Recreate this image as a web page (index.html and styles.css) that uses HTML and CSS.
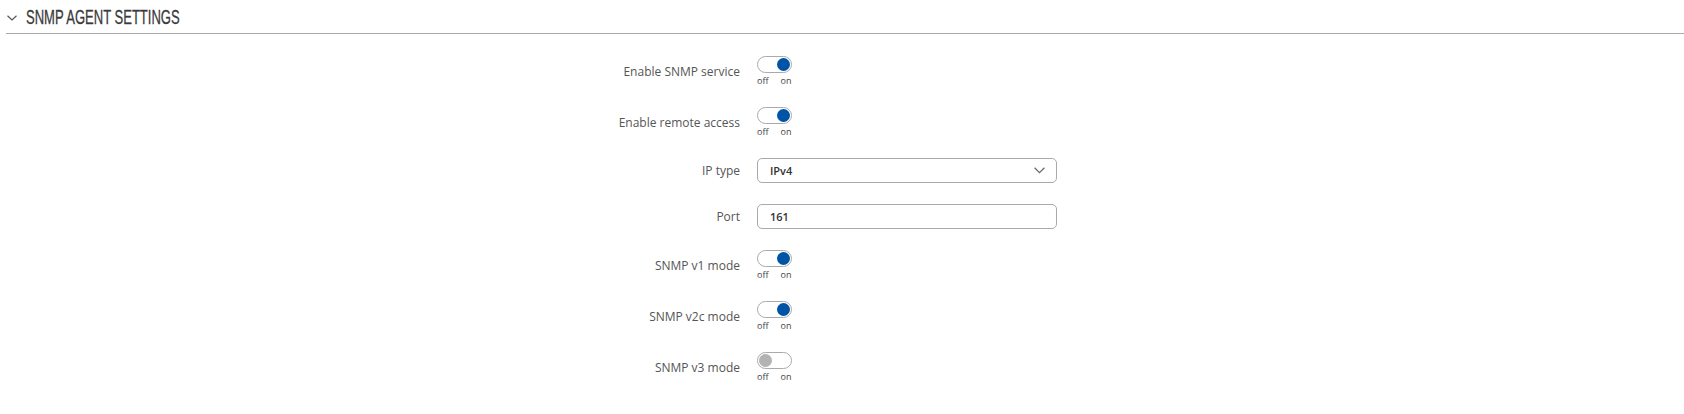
FILE: index.html
```html
<!DOCTYPE html>
<html lang="en">
<head>
    <meta charset="UTF-8">
    <title>SNMP Agent Settings</title>
    <link rel="stylesheet" href="styles.css">
</head>
<body>

<div class="section">
    <div class="section-title">
        <svg class="caret" width="10" height="6" viewBox="0 0 10 6"><path d="M0.5 0.8 L5 5 L9.5 0.8" fill="none" stroke="#555" stroke-width="1.2"/></svg>
        <h3>SNMP AGENT SETTINGS</h3>
    </div>

    <div class="form">
        <div class="field">
            <label>Enable SNMP service</label>
            <div class="switch-box">
                <span class="switch on"><span class="knob"></span></span>
                <span class="switch-text"><span>off</span><span>on</span></span>
            </div>
        </div>

        <div class="field">
            <label>Enable remote access</label>
            <div class="switch-box">
                <span class="switch on"><span class="knob"></span></span>
                <span class="switch-text"><span>off</span><span>on</span></span>
            </div>
        </div>

        <div class="field">
            <label>IP type</label>
            <div class="select">
                <span>IPv4</span>
                <svg width="11" height="7" viewBox="0 0 11 7"><path d="M0.6 0.8 L5.5 5.6 L10.4 0.8" fill="none" stroke="#666" stroke-width="1.2"/></svg>
            </div>
        </div>

        <div class="field">
            <label>Port</label>
            <div class="input">161</div>
        </div>

        <div class="field">
            <label>SNMP v1 mode</label>
            <div class="switch-box">
                <span class="switch on"><span class="knob"></span></span>
                <span class="switch-text"><span>off</span><span>on</span></span>
            </div>
        </div>

        <div class="field">
            <label>SNMP v2c mode</label>
            <div class="switch-box">
                <span class="switch on"><span class="knob"></span></span>
                <span class="switch-text"><span>off</span><span>on</span></span>
            </div>
        </div>

        <div class="field">
            <label>SNMP v3 mode</label>
            <div class="switch-box">
                <span class="switch"><span class="knob"></span></span>
                <span class="switch-text"><span>off</span><span>on</span></span>
            </div>
        </div>
    </div>
</div>

</body>
</html>
```

FILE: styles.css
```css
body {
    margin: 0;
    background-color: #fff;
    font-family: "Open Sans", "Noto Sans", sans-serif;
}

/* Cabecera de la sección */
.section-title {
    display: flex;
    align-items: center;
    height: 33px;
    margin-left: 6px;
    border-bottom: 1px solid #aaa;
}
.caret {
    margin: 2px 9px 0 1px;
}
.section-title h3 {
    margin: 0;
    font-family: "Liberation Sans", Arial, sans-serif;
    font-weight: normal;
    font-size: 21px;
    color: #3a3a3a;
    transform: scaleX(0.62);
    transform-origin: left center;
    -webkit-text-stroke: 0.3px #3a3a3a;
}

/* Formulario */
.form {
    padding-top: 22px;
}
.field {
    display: grid;
    grid-template-columns: 740px 300px;
    column-gap: 17px;
    align-items: center;
    margin-bottom: 21px;
}
.field label {
    text-align: right;
    font-size: 12px;
    color: #555;
}

/* Interruptores */
.switch-box {
    display: flex;
    flex-direction: column;
    height: 30px;
}
.switch {
    position: relative;
    box-sizing: border-box;
    width: 35px;
    height: 17px;
    border: 1px solid #aaa;
    border-radius: 9px;
    background-color: #fff;
}
.switch .knob {
    position: absolute;
    top: 1px;
    left: 1px;
    width: 13px;
    height: 13px;
    border-radius: 50%;
    background-color: #b3b3b3;
}
.switch.on .knob {
    left: auto;
    right: 1px;
    background-color: #0054a6;
}
.switch-text {
    display: flex;
    gap: 12px;
    margin-top: 3px;
    font-size: 9px;
    line-height: 10px;
    color: #444;
}

/* Campos */
.select, .input {
    box-sizing: border-box;
    display: flex;
    align-items: center;
    justify-content: space-between;
    height: 25px;
    padding: 0 11px 0 12px;
    border: 1px solid #aaa;
    border-radius: 5px;
    font-size: 11px;
    font-weight: 600;
    color: #333;
}
```
